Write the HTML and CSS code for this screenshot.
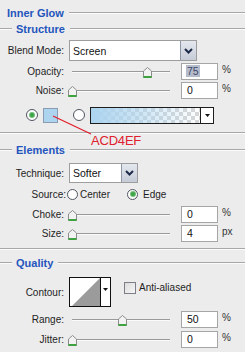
FILE: index.html
```html
<!DOCTYPE html>
<html>
<head>
<meta charset="utf-8">
<link rel="stylesheet" href="styles.css">
</head>
<body>
<div class="panel">
  <div class="heading top"><span class="htext">Inner Glow</span><span class="hline"></span></div>
  <div class="heading sub"><span class="hline lead"></span><span class="htext">Structure</span><span class="hline"></span></div>

  <div class="row r-blend">
    <span class="lbl">Blend Mode:</span>
    <div class="select blend"><span class="sel-text">Screen</span><span class="sel-btn"><svg width="15" height="18" viewBox="0 0 15 18"><polyline points="4,7 7.5,10.5 11,7" fill="none" stroke="#1d2a48" stroke-width="2"/></svg></span></div>
  </div>

  <div class="row srow r-opacity">
    <span class="lbl">Opacity:</span>
    <div class="slider"><span class="track"></span><svg class="thumb" style="left:75px" width="9" height="11" viewBox="0 0 9 11"><polygon points="4.5,0.5 8.5,4 8.5,10.5 0.5,10.5 0.5,4" fill="#f2f2f2" stroke="#8c8c8c"/><line x1="0.5" y1="10" x2="8.5" y2="10" stroke="#3ea23e" stroke-width="2"/></svg></div>
    <div class="num"><span class="hl">75</span></div><span class="unit">%</span>
  </div>

  <div class="row srow r-noise">
    <span class="lbl">Noise:</span>
    <div class="slider"><span class="track"></span><svg class="thumb" style="left:0px" width="9" height="11" viewBox="0 0 9 11"><polygon points="4.5,0.5 8.5,4 8.5,10.5 0.5,10.5 0.5,4" fill="#f2f2f2" stroke="#8c8c8c"/><line x1="0.5" y1="10" x2="8.5" y2="10" stroke="#3ea23e" stroke-width="2"/></svg></div>
    <div class="num">0</div><span class="unit">%</span>
  </div>

  <div class="row r-color">
    <span class="radio on r1"></span>
    <span class="swatch"></span>
    <span class="radio r2"></span>
    <div class="grad"><span class="grad-fill"></span><span class="grad-btn"><svg width="11" height="15" viewBox="0 0 11 15"><polygon points="3,6 8,6 5.5,9" fill="#111"/></svg></span></div>
  </div>

  <div class="sep s1"></div>

  <div class="heading sub h-el"><span class="hline lead"></span><span class="htext">Elements</span><span class="hline"></span></div>

  <div class="row r-tech">
    <span class="lbl">Technique:</span>
    <div class="select tech"><span class="sel-text">Softer</span><span class="sel-btn"><svg width="15" height="18" viewBox="0 0 15 18"><polyline points="4,7 7.5,10.5 11,7" fill="none" stroke="#1d2a48" stroke-width="2"/></svg></span></div>
  </div>

  <div class="row r-source">
    <span class="lbl wide">Source:</span>
    <span class="radio src1"></span><span class="rtext t1">Center</span>
    <span class="radio on src2"></span><span class="rtext t2">Edge</span>
  </div>

  <div class="row srow r-choke">
    <span class="lbl">Choke:</span>
    <div class="slider"><span class="track"></span><svg class="thumb" style="left:0px" width="9" height="11" viewBox="0 0 9 11"><polygon points="4.5,0.5 8.5,4 8.5,10.5 0.5,10.5 0.5,4" fill="#f2f2f2" stroke="#8c8c8c"/><line x1="0.5" y1="10" x2="8.5" y2="10" stroke="#3ea23e" stroke-width="2"/></svg></div>
    <div class="num">0</div><span class="unit">%</span>
  </div>

  <div class="row srow r-size">
    <span class="lbl">Size:</span>
    <div class="slider"><span class="track"></span><svg class="thumb" style="left:0px" width="9" height="11" viewBox="0 0 9 11"><polygon points="4.5,0.5 8.5,4 8.5,10.5 0.5,10.5 0.5,4" fill="#f2f2f2" stroke="#8c8c8c"/><line x1="0.5" y1="10" x2="8.5" y2="10" stroke="#3ea23e" stroke-width="2"/></svg></div>
    <div class="num">4</div><span class="unit">px</span>
  </div>

  <div class="sep s2"></div>

  <div class="heading sub h-q"><span class="hline lead"></span><span class="htext">Quality</span><span class="hline"></span></div>

  <div class="row r-contour">
    <span class="lbl">Contour:</span>
    <div class="contour"><svg width="40" height="28" viewBox="0 0 40 28"><rect x="0" y="0" width="40" height="28" fill="#fff"/><polygon points="2,28 30,0 30,28" fill="#9b9b9b"/><line x1="30.5" y1="0" x2="30.5" y2="28" stroke="#111" stroke-width="1"/><polygon points="33,10 38,10 35.5,13" fill="#111"/></svg></div>
    <span class="check"></span><span class="ctext">Anti-aliased</span>
  </div>

  <div class="row srow r-range">
    <span class="lbl">Range:</span>
    <div class="slider"><span class="track"></span><svg class="thumb" style="left:50px" width="9" height="11" viewBox="0 0 9 11"><polygon points="4.5,0.5 8.5,4 8.5,10.5 0.5,10.5 0.5,4" fill="#f2f2f2" stroke="#8c8c8c"/><line x1="0.5" y1="10" x2="8.5" y2="10" stroke="#3ea23e" stroke-width="2"/></svg></div>
    <div class="num">50</div><span class="unit">%</span>
  </div>

  <div class="row srow r-jitter">
    <span class="lbl">Jitter:</span>
    <div class="slider"><span class="track"></span><svg class="thumb" style="left:0px" width="9" height="11" viewBox="0 0 9 11"><polygon points="4.5,0.5 8.5,4 8.5,10.5 0.5,10.5 0.5,4" fill="#f2f2f2" stroke="#8c8c8c"/><line x1="0.5" y1="10" x2="8.5" y2="10" stroke="#3ea23e" stroke-width="2"/></svg></div>
    <div class="num">0</div><span class="unit">%</span>
  </div>

  <svg class="callout-line" width="245" height="352" viewBox="0 0 245 352"><line x1="53" y1="116" x2="91" y2="134" stroke="#e0202c" stroke-width="1.3"/></svg>
  <span class="callout">ACD4EF</span>
</div>
</body>
</html>
```

FILE: styles.css
```css
html, body {
  margin: 0;
  padding: 0;
  background: #ececec;
}

.panel {
  position: relative;
  width: 245px;
  height: 352px;
  overflow: hidden;
  display: flex;
  flex-direction: column;
  font-family: "Liberation Sans", Arial, sans-serif;
  font-size: 10px;
  color: #1e1e1e;
  background: #ececec;
}

/* headings */
.heading {
  display: flex;
  align-items: center;
  height: 16px;
  flex: none;
}
.heading.top {
  margin-top: 5px;
  padding-left: 7px;
}
.htext {
  font-weight: bold;
  font-size: 11px;
  color: #2455bd;
  white-space: nowrap;
}
.hline {
  flex: 1;
  height: 0;
  border-top: 1px solid #a8a8a8;
  border-bottom: 1px solid #fbfbfb;
  margin-left: 5px;
}
.hline.lead {
  flex: none;
  width: 12px;
  margin-left: 0;
  margin-right: 4px;
}
.h-el { margin-top: 8px; }
.h-q { margin-top: 5px; }

.sep {
  flex: none;
  height: 0;
  border-top: 1px solid #a8a8a8;
  border-bottom: 1px solid #fbfbfb;
}
.s1 { margin-top: 9px; }
.s2 { margin-top: 6px; }

/* rows */
.row {
  display: flex;
  align-items: center;
  flex: none;
}
.lbl {
  width: 64px;
  text-align: right;
  white-space: nowrap;
  flex: none;
}
.lbl.wide { width: 66px; }

.r-blend { margin-top: 3px; height: 21px; }
.r-opacity { margin-top: 2px; height: 17px; }
.r-noise { margin-top: 2px; height: 17px; }
.r-color { margin-top: 8px; height: 16px; }
.r-tech { margin-top: 5px; height: 20px; }
.r-source { margin-top: 4px; height: 14px; }
.r-choke { margin-top: 5px; height: 17px; }
.r-size { margin-top: 2px; height: 17px; }
.r-contour { margin-top: 6px; height: 30px; }
.r-range { margin-top: 4px; height: 17px; }
.r-jitter { margin-top: 3px; height: 17px; }

/* select */
.select {
  margin-left: 5px;
  display: flex;
  box-sizing: border-box;
  border: 1px solid #9d9d9d;
  background: #fff;
  flex: none;
}
.select.blend { width: 128px; height: 21px; }
.select.tech { width: 69px; height: 20px; }
.sel-text {
  flex: 1;
  padding-left: 3px;
  display: flex;
  align-items: center;
  font-size: 10.5px;
  color: #111;
}
.sel-btn {
  width: 16px;
  box-sizing: border-box;
  border-left: 1px solid #8e97a8;
  background: linear-gradient(#e4e7ee, #c6ccd8);
  display: flex;
  align-items: center;
  justify-content: center;
}

/* sliders */
.slider {
  position: relative;
  width: 108px;
  height: 17px;
  margin-left: 4px;
  flex: none;
}
.track {
  position: absolute;
  left: 4px;
  right: 6px;
  top: 8px;
  height: 0;
  border-top: 1px solid #9a9a9a;
  border-bottom: 1px solid #fafafa;
}
.thumb {
  position: absolute;
  top: 4px;
  display: block;
}
.num {
  margin-left: 5px;
  width: 37px;
  height: 17px;
  box-sizing: border-box;
  border: 1px solid #a6a6a6;
  background: #fff;
  padding-left: 5px;
  line-height: 15px;
  font-size: 10.5px;
  color: #111;
  flex: none;
}
.hl {
  background: #b6bbca;
  color: #3c4a6a;
  padding: 0 1px;
  margin-left: -1px;
}
.unit {
  margin-left: 4px;
  align-self: flex-start;
  margin-top: 1px;
  font-size: 10px;
  color: #333;
}

/* radios */
.radio {
  width: 12px;
  height: 12px;
  box-sizing: border-box;
  border-radius: 50%;
  border: 1px solid #4f5560;
  background: #fff;
  display: flex;
  align-items: center;
  justify-content: center;
  flex: none;
}
.radio.on::after {
  content: "";
  width: 4px;
  height: 4px;
  border-radius: 50%;
  background: #3fa34a;
  box-shadow: 0 0 0 1px #6fbf74;
}
.r1 { margin-left: 26px; }
.swatch {
  margin-left: 5px;
  width: 15px;
  height: 15px;
  box-sizing: border-box;
  background: #acd4ef;
  border: 1px solid #8a9bb3;
  flex: none;
}
.r2 { margin-left: 15px; }
.grad {
  margin-left: 5px;
  width: 124px;
  height: 17px;
  box-sizing: border-box;
  border: 1px solid #1d1d1d;
  display: flex;
  flex: none;
}
.grad-fill {
  flex: 1;
  background-image: linear-gradient(to right, #acd4ef 0%, rgba(172, 212, 239, 0.6) 45%, rgba(172, 212, 239, 0) 100%),
    repeating-conic-gradient(#d6d6d6 0 25%, #ffffff 0 50%);
  background-size: 100% 100%, 8px 8px;
}
.grad-btn {
  width: 12px;
  border-left: 1px solid #1d1d1d;
  background: #fff;
  display: flex;
  align-items: center;
  justify-content: center;
}

.src1 { margin-left: 1px; width: 11px; height: 11px; }
.src2 { margin-left: 17px; width: 11px; height: 11px; }
.rtext { font-size: 10px; }
.t1 { margin-left: 2px; }
.t2 { margin-left: 5px; }

/* contour */
.contour {
  margin-left: 5px;
  width: 42px;
  height: 30px;
  box-sizing: border-box;
  border: 1px solid #111;
  flex: none;
  display: flex;
}
.contour svg { display: block; }
.check {
  margin-left: 13px;
  width: 12px;
  height: 12px;
  box-sizing: border-box;
  border: 1px solid #7a7f88;
  background: linear-gradient(135deg, #dcdcdc, #f6f6f6);
  align-self: flex-start;
  margin-top: 5px;
  flex: none;
}
.ctext {
  margin-left: 3px;
  align-self: flex-start;
  margin-top: 5px;
}

/* callout annotation */
.callout-line {
  position: absolute;
  left: 0;
  top: 0;
  pointer-events: none;
}
.callout {
  position: absolute;
  left: 91px;
  top: 133px;
  font-size: 13px;
  color: #e0202c;
  letter-spacing: -0.2px;
}
```
